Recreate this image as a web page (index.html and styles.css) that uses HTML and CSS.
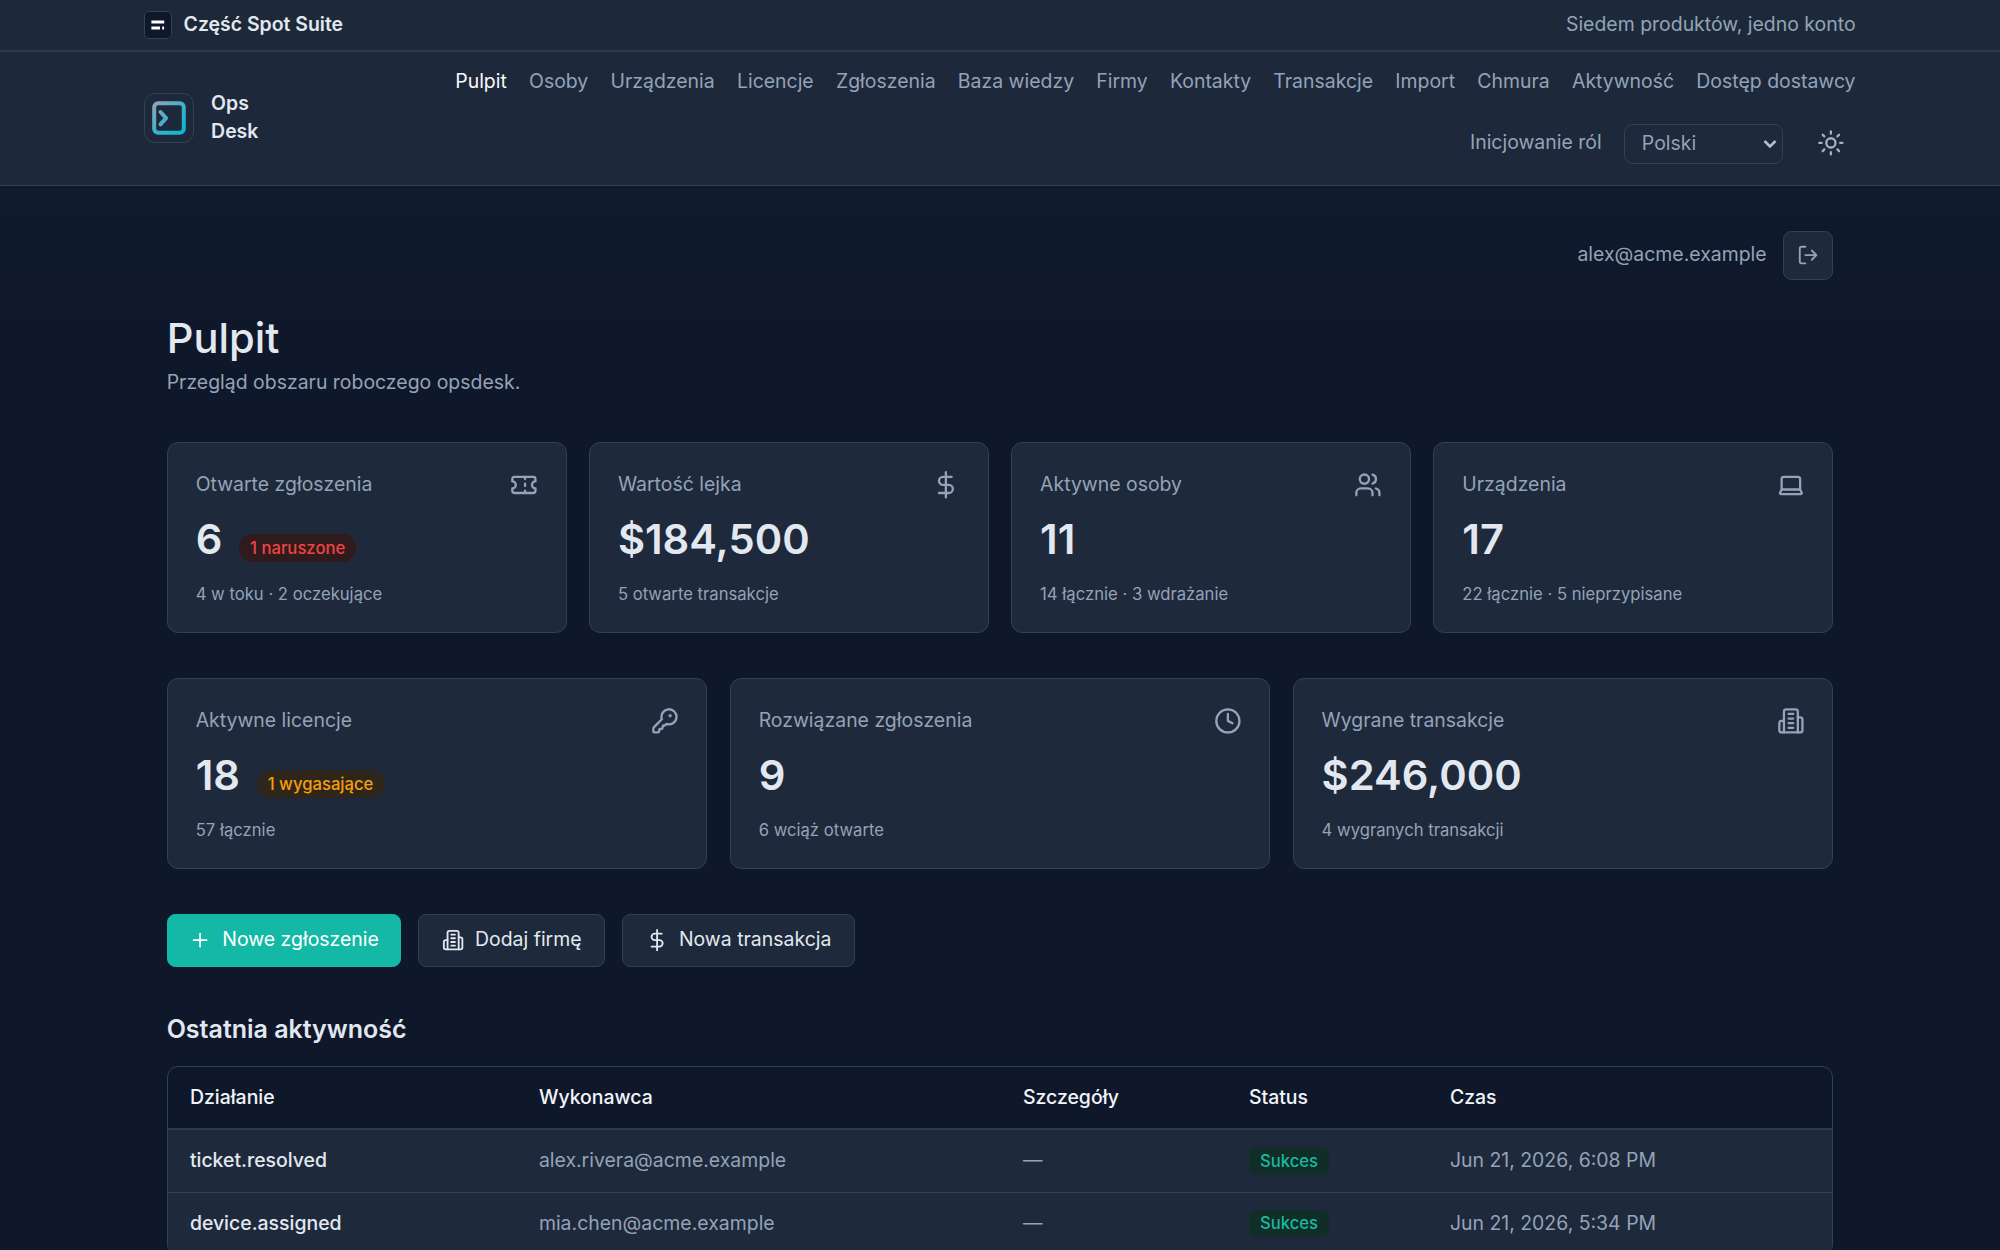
FILE: index.html
```html
<!DOCTYPE html>
<html lang="pl">
<head>
    <meta charset="UTF-8">
    <meta name="viewport" content="width=device-width, initial-scale=1.0">
    <title>Ops Desk - Pulpit</title>
    <link rel="stylesheet" href="styles.css">
</head>
<body>
    <!-- Shared icons -->
    <svg class="sprite" aria-hidden="true">
        <symbol id="i-ticket" viewBox="0 0 24 24"><path d="M2 9a3 3 0 0 1 0 6v2a2 2 0 0 0 2 2h16a2 2 0 0 0 2-2v-2a3 3 0 0 1 0-6V7a2 2 0 0 0-2-2H4a2 2 0 0 0-2 2Z"/><path d="M13 5v2M13 17v2M13 11v2"/></symbol>
        <symbol id="i-dollar" viewBox="0 0 24 24"><path d="M12 1v22M17 5H9.5a3.5 3.5 0 0 0 0 7h5a3.5 3.5 0 0 1 0 7H6"/></symbol>
        <symbol id="i-users" viewBox="0 0 24 24"><path d="M16 21v-2a4 4 0 0 0-4-4H6a4 4 0 0 0-4 4v2"/><circle cx="9" cy="7" r="4"/><path d="M22 21v-2a4 4 0 0 0-3-3.87M16 3.13a4 4 0 0 1 0 7.75"/></symbol>
        <symbol id="i-laptop" viewBox="0 0 24 24"><path d="M20 16V7a2 2 0 0 0-2-2H6a2 2 0 0 0-2 2v9m16 0H4m16 0 1.28 2.55a1 1 0 0 1-.9 1.45H3.62a1 1 0 0 1-.9-1.45L4 16"/></symbol>
        <symbol id="i-key" viewBox="0 0 24 24"><path d="M2.586 17.414A2 2 0 0 0 2 18.828V21a1 1 0 0 0 1 1h3a1 1 0 0 0 1-1v-1a1 1 0 0 1 1-1h1a1 1 0 0 0 1-1v-1a1 1 0 0 1 1-1h.172a2 2 0 0 0 1.414-.586l.814-.814a6.5 6.5 0 1 0-4-4z"/><circle cx="16.5" cy="7.5" r=".5" fill="currentColor"/></symbol>
        <symbol id="i-clock" viewBox="0 0 24 24"><circle cx="12" cy="12" r="10"/><path d="M12 6v6l4 2"/></symbol>
        <symbol id="i-building" viewBox="0 0 24 24"><path d="M6 22V4a2 2 0 0 1 2-2h8a2 2 0 0 1 2 2v18Z"/><path d="M6 12H4a2 2 0 0 0-2 2v6a2 2 0 0 0 2 2h2M18 9h2a2 2 0 0 1 2 2v9a2 2 0 0 1-2 2h-2M10 6h4M10 10h4M10 14h4M10 18h4"/></symbol>
        <symbol id="i-plus" viewBox="0 0 24 24"><path d="M5 12h14M12 5v14"/></symbol>
        <symbol id="i-logout" viewBox="0 0 24 24"><path d="M9 21H5a2 2 0 0 1-2-2V5a2 2 0 0 1 2-2h4M16 17l5-5-5-5M21 12H9"/></symbol>
        <symbol id="i-sun" viewBox="0 0 24 24"><circle cx="12" cy="12" r="4"/><path d="M12 2v2M12 20v2M4.93 4.93l1.41 1.41M17.66 17.66l1.41 1.41M2 12h2M20 12h2M6.34 17.66l-1.41 1.41M19.07 4.93l-1.41 1.41"/></symbol>
    </svg>

    <div class="suite-bar">
        <div class="wrap suite-inner">
            <a class="suite-brand">
                <svg class="suite-logo" viewBox="0 0 28 28">
                    <rect x=".5" y=".5" width="27" height="27" rx="4.5" fill="#0f172a" stroke="#334155"/>
                    <path d="M7.4 9.4h12.8v3H7.4zM7.4 15.5H16v3H7.4zM18.2 15.5h1.9v3h-1.9z" fill="#fff"/>
                </svg>
                Część Spot Suite
            </a>
            <span class="suite-note">Siedem produktów, jedno konto</span>
        </div>
    </div>

    <header class="site-header">
        <div class="wrap header-inner">
            <a class="brand">
                <span class="brand-logo">
                    <svg viewBox="0 0 36 36">
                        <defs>
                            <linearGradient id="brand-grad" gradientUnits="userSpaceOnUse" x1="2" y1="2" x2="34" y2="34">
                                <stop offset="0" stop-color="#94a3b8"/>
                                <stop offset=".55" stop-color="#38b2cd"/>
                                <stop offset="1" stop-color="#06b6d4"/>
                            </linearGradient>
                        </defs>
                        <g fill="none" stroke="url(#brand-grad)" stroke-linecap="round" stroke-linejoin="round">
                            <rect x="3.2" y="3.2" width="29.6" height="29.6" rx="4" stroke-width="4"/>
                            <path d="M9.5 12l5.6 6.2-5.6 6.2" stroke-width="4"/>
                        </g>
                    </svg>
                </span>
                <span class="brand-name">Ops<br>Desk</span>
            </a>
            <nav class="nav">
                <a class="active">Pulpit</a>
                <a>Osoby</a>
                <a>Urządzenia</a>
                <a>Licencje</a>
                <a>Zgłoszenia</a>
                <a>Baza wiedzy</a>
                <a>Firmy</a>
                <a>Kontakty</a>
                <a>Transakcje</a>
                <a>Import</a>
                <a>Chmura</a>
                <a>Aktywność</a>
                <a>Dostęp dostawcy</a>
                <a>Inicjowanie ról</a>
                <div class="lang">
                    <span>Polski</span>
                    <svg class="lang-arrow" viewBox="0 0 14 10"><path d="M1.5 2l5.5 5.5L12.5 2"/></svg>
                </div>
                <button class="theme-btn" aria-label="Motyw"><svg class="icon icon-lg"><use href="#i-sun"/></svg></button>
            </nav>
        </div>
    </header>

    <main class="main">
        <div class="user-row">
            <span class="user-mail">alex@acme.example</span>
            <button class="logout" aria-label="Wyloguj"><svg class="icon"><use href="#i-logout"/></svg></button>
        </div>

        <h1>Pulpit</h1>
        <p class="subtitle">Przegląd obszaru roboczego opsdesk.</p>

        <section class="cards cards-4">
            <div class="card">
                <div class="card-head"><span>Otwarte zgłoszenia</span><svg class="icon icon-lg"><use href="#i-ticket"/></svg></div>
                <div class="card-value">6 <span class="pill pill-danger">1 naruszone</span></div>
                <div class="card-sub">4 w toku · 2 oczekujące</div>
            </div>
            <div class="card">
                <div class="card-head"><span>Wartość lejka</span><svg class="icon icon-lg"><use href="#i-dollar"/></svg></div>
                <div class="card-value">$184,500</div>
                <div class="card-sub">5 otwarte transakcje</div>
            </div>
            <div class="card">
                <div class="card-head"><span>Aktywne osoby</span><svg class="icon icon-lg"><use href="#i-users"/></svg></div>
                <div class="card-value">11</div>
                <div class="card-sub">14 łącznie · 3 wdrażanie</div>
            </div>
            <div class="card">
                <div class="card-head"><span>Urządzenia</span><svg class="icon icon-lg"><use href="#i-laptop"/></svg></div>
                <div class="card-value">17</div>
                <div class="card-sub">22 łącznie · 5 nieprzypisane</div>
            </div>
        </section>

        <section class="cards cards-3">
            <div class="card">
                <div class="card-head"><span>Aktywne licencje</span><svg class="icon icon-lg"><use href="#i-key"/></svg></div>
                <div class="card-value">18 <span class="pill pill-warn">1 wygasające</span></div>
                <div class="card-sub">57 łącznie</div>
            </div>
            <div class="card">
                <div class="card-head"><span>Rozwiązane zgłoszenia</span><svg class="icon icon-lg"><use href="#i-clock"/></svg></div>
                <div class="card-value">9</div>
                <div class="card-sub">6 wciąż otwarte</div>
            </div>
            <div class="card">
                <div class="card-head"><span>Wygrane transakcje</span><svg class="icon icon-lg"><use href="#i-building"/></svg></div>
                <div class="card-value">$246,000</div>
                <div class="card-sub">4 wygranych transakcji</div>
            </div>
        </section>

        <div class="actions">
            <a class="btn btn-primary"><svg class="icon"><use href="#i-plus"/></svg>Nowe zgłoszenie</a>
            <a class="btn"><svg class="icon"><use href="#i-building"/></svg>Dodaj firmę</a>
            <a class="btn"><svg class="icon"><use href="#i-dollar"/></svg>Nowa transakcja</a>
        </div>

        <h2>Ostatnia aktywność</h2>
        <div class="table-wrap">
            <table>
                <colgroup>
                    <col class="col-action"><col class="col-actor"><col class="col-details"><col class="col-status"><col>
                </colgroup>
                <thead>
                    <tr><th>Działanie</th><th>Wykonawca</th><th>Szczegóły</th><th>Status</th><th>Czas</th></tr>
                </thead>
                <tbody>
                    <tr><td>ticket.resolved</td><td>alex.rivera@acme.example</td><td>—</td><td><span class="status">Sukces</span></td><td>Jun 21, 2026, 6:08 PM</td></tr>
                    <tr><td>device.assigned</td><td>mia.chen@acme.example</td><td>—</td><td><span class="status">Sukces</span></td><td>Jun 21, 2026, 5:34 PM</td></tr>
                </tbody>
            </table>
        </div>
    </main>
</body>
</html>
```
FILE: styles.css
```css
:root {
    --bg: #0f172a;
    --surface: #1e293b;
    --border: #334155;
    --text: #e2e8f0;
    --muted: #94a3b8;
    --primary: #14b8a6;
}
html {
    font-size: 22.222px;
}
* { box-sizing: border-box; }
body {
    margin: 0;
    height: 100vh;
    overflow: hidden;
    background: linear-gradient(180deg, #0f1d2e 0, #0f172a 400px) var(--bg);
    color: var(--text);
    font-family: Inter, sans-serif;
    font-size: 0.875rem;
    line-height: 1.25rem;
}
h1, h2, p { margin: 0; }
button { font: inherit; padding: 0; }
.sprite { display: none; }
.icon {
    width: 1rem;
    height: 1rem;
    flex: none;
    fill: none;
    stroke: currentColor;
    stroke-width: 2;
    stroke-linecap: round;
    stroke-linejoin: round;
}
.icon-lg {
    width: 1.25rem;
    height: 1.25rem;
}

/* top bars */
.wrap {
    width: 77rem;
    margin: 0 auto;
    display: flex;
    align-items: center;
    justify-content: space-between;
}
.suite-bar {
    height: 52px;
    background: #1d2938;
    border-bottom: 2px solid #2b394a;
}
.suite-inner { height: 50px; }
.suite-brand {
    display: flex;
    align-items: center;
    gap: 0.5rem;
    font-weight: 600;
}
.suite-logo {
    width: 28px;
    height: 28px;
}
.suite-note { color: var(--muted); }
.site-header {
    height: 134px;
    background: #1d283a;
    border-bottom: 1px solid var(--border);
}
.header-inner { height: 131.5px; }
.brand {
    display: flex;
    align-items: center;
    gap: 0.75rem;
    font-weight: 600;
}
.brand-logo {
    width: 2.25rem;
    height: 2.25rem;
    padding: 6px;
    border: 1px solid var(--border);
    border-radius: 0.5rem;
}
.brand-logo svg { display: block; }
.nav {
    width: 64rem;
    display: flex;
    flex-wrap: wrap;
    justify-content: flex-end;
    align-items: center;
    gap: 1rem;
    color: var(--muted);
}
.nav .active { color: #f8fafc; }
.lang {
    width: 159.5px;
    height: 40px;
    margin-top: 2px;
    padding: 0 5px 0 17px;
    display: flex;
    align-items: center;
    justify-content: space-between;
    background: var(--surface);
    border: 1px solid var(--border);
    border-radius: 0.375rem;
}
.lang-arrow {
    width: 14px;
    height: 10px;
    fill: none;
    stroke: #b4c0d0;
    stroke-width: 2.6;
}
.theme-btn {
    width: 2.25rem;
    height: 2.25rem;
    display: grid;
    place-items: center;
    background: none;
    border: 0;
    color: #a3b1c4;
}

/* page */
.main {
    width: 75rem;
    margin: 0 auto;
    padding-top: 44.5px;
}
.user-row {
    display: flex;
    justify-content: flex-end;
    align-items: center;
    gap: 0.75rem;
    color: var(--muted);
}
.user-mail { margin-bottom: 2px; }
.logout {
    width: 2.25rem;
    height: 2.25rem;
    display: grid;
    place-items: center;
    background: var(--surface);
    border: 1px solid var(--border);
    border-radius: 0.375rem;
    color: var(--muted);
}
h1 {
    margin-top: 32.5px;
    font-size: 1.875rem;
    line-height: 2.25rem;
    font-weight: 500;
}
.subtitle {
    margin-top: 6px;
    color: var(--muted);
}
.cards {
    display: grid;
    gap: 1rem;
    margin-top: 45px;
}
.cards-4 { grid-template-columns: repeat(4, 1fr); }
.cards-3 { grid-template-columns: repeat(3, 1fr); }
.card {
    height: 191px;
    padding: 28px;
    background: var(--surface);
    border: 1px solid var(--border);
    border-radius: 0.5rem;
}
.card-head {
    display: flex;
    justify-content: space-between;
    color: var(--muted);
}
.card-value {
    display: flex;
    align-items: baseline;
    gap: 0.75rem;
    margin-top: 13.5px;
    font-size: 1.875rem;
    line-height: 2.5rem;
    font-weight: 600;
}
.card-sub {
    margin-top: 15px;
    font-size: 0.75rem;
    line-height: 1rem;
    color: var(--muted);
}
.pill {
    padding: 0.125rem 0.5rem;
    border-radius: 999px;
    font-size: 0.75rem;
    line-height: 1rem;
    font-weight: 500;
}
.pill-danger {
    background: #301b1c;
    color: #ef4444;
}
.pill-warn {
    background: #2f261b;
    color: #f59e0b;
}
.actions {
    display: flex;
    gap: 17px;
    margin-top: 45px;
}
.btn {
    display: inline-flex;
    align-items: center;
    gap: 0.5rem;
    height: 53px;
    padding: 0 22.5px;
    background: var(--surface);
    border: 1px solid var(--border);
    border-radius: 0.375rem;
}
.btn-primary {
    padding: 0 21.3px;
    background: var(--primary);
    border-color: var(--primary);
    color: #fff;
}
h2 {
    margin-top: 43px;
    font-size: 1.125rem;
    line-height: 1.75rem;
    font-weight: 600;
}

/* activity table */
.table-wrap {
    margin-top: 17.5px;
    border: 1px solid var(--border);
    border-radius: 0.5rem;
    overflow: hidden;
}
table {
    width: 100%;
    border-collapse: separate;
    border-spacing: 0;
    table-layout: fixed;
}
.col-action { width: 349px; }
.col-actor { width: 484px; }
.col-details { width: 226px; }
.col-status { width: 201px; }
th, td {
    height: 62.5px;
    padding: 0 1rem;
    text-align: left;
    color: var(--muted);
    border-bottom: 1px solid var(--border);
}
th {
    height: 63px;
    padding-top: 1px;
    border-bottom: 2px solid #2d3a4d;
    font-weight: 500;
    color: #f1f5f9;
}
tbody tr {
    background: var(--surface);
}
td:first-child {
    font-weight: 500;
    color: var(--text);
}
.status {
    display: inline-block;
    padding: 0.125rem 0.5rem;
    border-radius: 0.375rem;
    background: #102d28;
    color: #1cb9a0;
    font-size: 0.75rem;
    line-height: 1rem;
    font-weight: 500;
}
```
